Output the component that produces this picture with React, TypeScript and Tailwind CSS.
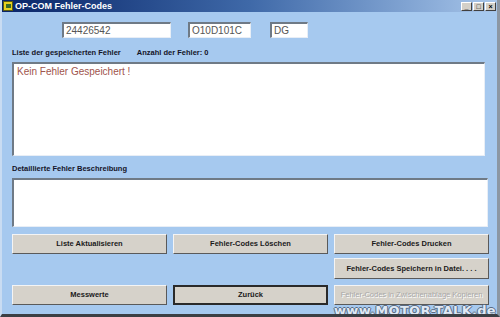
import React from "react";

const font = { fontFamily: '"Liberation Sans", Arial, sans-serif' };

function Field({ value, className }: { value: string; className: string }) {
  return (
    <div
      className={`h-[16px] bg-white border-t-2 border-l-2 border-t-[#6f7a86] border-l-[#6f7a86] border-b border-r border-b-[#e8eef6] border-r-[#e8eef6] pl-[2px] text-[10px] leading-[13px] text-[#555] ${className}`}
    >
      {value}
    </div>
  );
}

function WinButton({
  label,
  focused,
  disabled,
  className = "",
}: {
  label: string;
  focused?: boolean;
  disabled?: boolean;
  className?: string;
}) {
  return (
    <div
      className={`w-[155px] flex items-center justify-center bg-[#d6d2ca] text-[7.5px] font-bold ${
        disabled ? "text-[#a8a8a8] font-normal" : "text-[#1a1a1a]"
      } ${
        focused
          ? "border-2 border-[#2a2a2a]"
          : "border border-t-[#f4f4f4] border-l-[#f4f4f4] border-b-[#5a5a5a] border-r-[#5a5a5a]"
      } ${className}`}
      style={disabled ? { textShadow: "1px 1px 0 #fff" } : undefined}
    >
      {label}
    </div>
  );
}

export default function App() {
  return (
    <div
      className="relative w-[500px] h-[317px] overflow-hidden bg-[#a6c9ef] flex flex-col border-l-2 border-l-[#c9dcf2] border-r-[3px] border-r-[#8c97a3] border-b-[3px] border-b-[#3c3f44]"
      style={font}
    >
      {/* title bar */}
      <div className="h-[12px] shrink-0 flex items-center bg-gradient-to-r from-[#0a2468] via-[#3f69a8] to-[#a8c6ea]">
        <div className="w-[10px] h-[10px] ml-[1px] bg-[#e8d020] border border-[#5a5a10] flex items-center justify-center">
          <div className="w-[5px] h-[4px] bg-[#3a6a2a]" />
        </div>
        <span className="ml-[2px] text-[9px] font-bold text-white leading-none">
          OP-COM Fehler-Codes
        </span>
        <div className="ml-auto mr-[1px] flex gap-[1px]">
          {["_", "□", "×"].map((c) => (
            <div
              key={c}
              className="w-[11px] h-[9px] bg-[#d4d0c8] border border-t-white border-l-white border-b-[#404040] border-r-[#404040] text-[7px] leading-[7px] font-bold text-black flex items-center justify-center"
            >
              {c}
            </div>
          ))}
        </div>
      </div>

      {/* id fields */}
      <div className="mt-[10px] flex pl-[60px]">
        <Field value="24426542" className="w-[109px]" />
        <Field value="O10D101C" className="w-[63px] ml-[17px]" />
        <Field value="DG" className="w-[38px] ml-[19px]" />
      </div>

      {/* labels */}
      <div className="mt-[10px] ml-[10px] flex text-[7.5px] font-bold text-[#141428] leading-[9px]">
        <span>Liste der gespeicherten Fehler</span>
        <span className="ml-[16px]">Anzahl der Fehler: 0</span>
      </div>

      <div className="mt-[5px] ml-[10px] w-[473px] h-[94px] bg-white border-t-2 border-l-2 border-t-[#6f7a86] border-l-[#6f7a86] border-b border-r border-b-[#e8eef6] border-r-[#e8eef6] pl-[3px] pt-[2px] text-[10px] leading-[12px] text-[#a0544c]">
        Kein Fehler Gespeichert !
      </div>

      <div className="mt-[8px] ml-[10px] text-[7.5px] font-bold text-[#141428] leading-[9px]">
        Detaillierte Fehler Beschreibung
      </div>

      <div className="mt-[5px] ml-[10px] w-[476px] h-[49px] bg-white border-t-2 border-l-2 border-t-[#6f7a86] border-l-[#6f7a86] border-b border-r border-b-[#e8eef6] border-r-[#e8eef6]" />

      {/* buttons */}
      <div className="mt-[7px] ml-[10px] flex gap-[6px] h-[20px]">
        <WinButton label="Liste Aktualisieren" />
        <WinButton label="Fehler-Codes Löschen" />
        <WinButton label="Fehler-Codes Drucken" />
      </div>
      <div className="mt-[4px] ml-[332px] flex h-[21px]">
        <WinButton label="Fehler-Codes Speichern in Datei. . . ." />
      </div>
      <div className="mt-[6px] ml-[10px] flex gap-[6px] h-[20px]">
        <WinButton label="Messwerte" />
        <WinButton label="Zurück" focused />
        <WinButton label="Fehler-Codes in Zwischenablage Kopieren" disabled />
      </div>

      {/* watermark */}
      <div
        className="absolute right-[1px] bottom-[-3px] text-[13px] font-bold text-[#dfe8f4] tracking-[0.3px] leading-none"
        style={{
          fontFamily: '"DejaVu Sans", sans-serif',
          textShadow:
            "1px 0 0 #5a6c84, -1px 0 0 #5a6c84, 0 1px 0 #5a6c84, 0 -1px 0 #5a6c84",
        }}
      >
        www.MOTOR-TALK.de
      </div>
    </div>
  );
}
